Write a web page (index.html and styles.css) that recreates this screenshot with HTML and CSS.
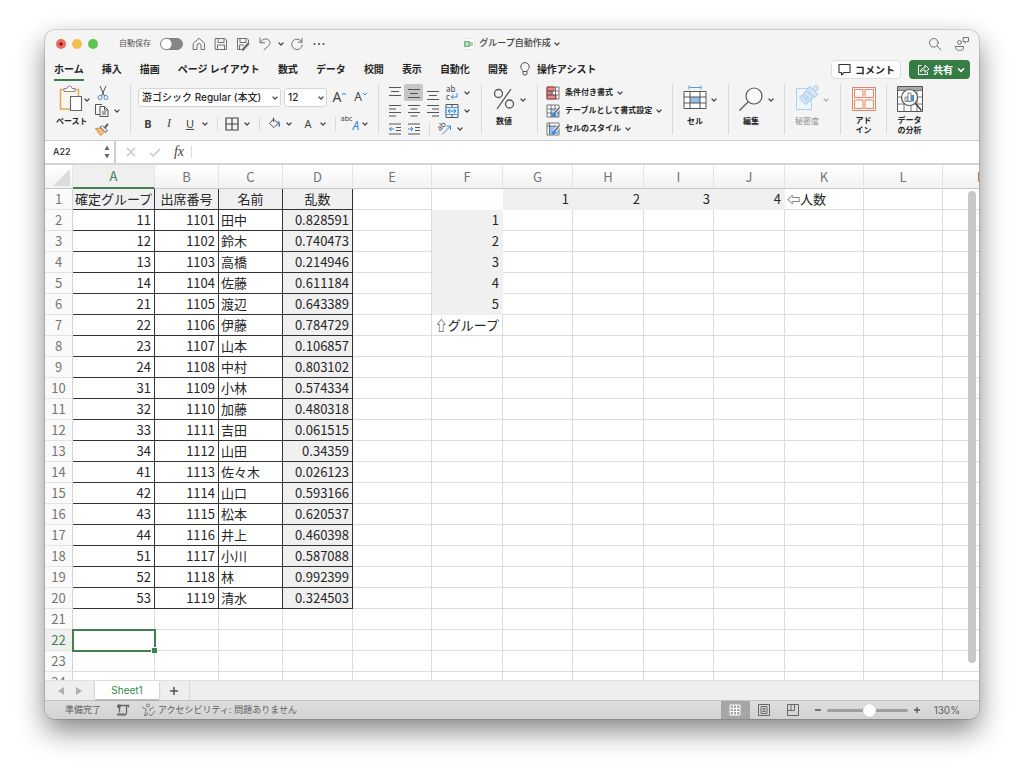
FILE: index.html
```html
<!DOCTYPE html>
<html lang="ja">
<head>
<meta charset="utf-8">
<title>グループ自動作成</title>
<link rel="stylesheet" href="styles.css">
</head>
<body>
<svg class="defs" aria-hidden="true">
  <symbol id="chev" viewBox="0 0 8 8"><path d="M2 3l2 2.2L6 3" fill="none" stroke="currentColor" stroke-width="1.2" stroke-linecap="round" stroke-linejoin="round"/></symbol>
</svg>
<main class="window">
  <header class="titlebar">
    <div class="title-left">
      <span class="lights"><i class="light red"></i><i class="light yellow"></i><i class="light green"></i></span>
      <label class="autosave">自動保存<input type="checkbox" class="switch"></label>
      <div class="quick">
        <button aria-label="ホーム画面"><svg width="14" height="14" viewBox="0 0 14 14"><path d="M1.5 6.2L7 1.3l5.500 4.900v6.300H9V8.500a2 2 0 0 0-4 0v4H1.500z"/></svg></button>
        <button aria-label="保存"><svg width="14" height="14" viewBox="0 0 14 14"><path d="M1.500 1.500h9.500l1.500 1.500v9.500h-11zM4 1.500v4h6v-4M3.500 12.500V8h7v4.500"/></svg></button>
        <button aria-label="名前を付けて保存"><svg width="14" height="14" viewBox="0 0 14 14"><path d="M5 12.500H1.500v-11h9.500l1.500 1.500v3M4 1.500v4h6v-4M3.500 12.500V8h4"/><path d="M7 12.500l5-5.500" stroke-width="2.600"/></svg></button>
        <button aria-label="元に戻す"><svg width="14" height="14" viewBox="0 0 14 14"><path d="M2 1v4.800h4.800M2.300 5.500C4 2.500 7.500 1 10 2.500c2.500 1.700 2.300 4.500.5 6.300L6 13"/></svg></button>
        <button class="narrow" aria-label="元に戻す履歴"><svg class="chev" width="8" height="8"><use href="#chev"/></svg></button>
        <button aria-label="繰り返し"><svg width="14" height="14" viewBox="0 0 14 14"><path d="M12 1.500v3.700H8.300M11.800 5A5.300 5.300 0 1 0 12.300 8"/></svg></button>
        <button aria-label="その他"><svg width="14" height="14" viewBox="0 0 14 14"><g fill="#555" stroke="none"><circle cx="2.500" cy="7" r="1.100"/><circle cx="7" cy="7" r="1.100"/><circle cx="11.500" cy="7" r="1.100"/></g></svg></button>
      </div>
    </div>
    <h1 class="doc-title"><svg width="12" height="12" viewBox="0 0 12 12"><path d="M2.500.5H9L11.500 3v8.500h-9z" fill="#fff" stroke="#ddd" stroke-width=".6"/><rect x="1" y="3" width="6" height="6" rx=".6" fill="#7fb98c"/><path d="M7 4h3v4H7z" fill="#a9d3b1"/><path d="M2.800 4.500l2.400 3M5.200 4.500l-2.400 3" stroke="#fff" stroke-width=".9"/></svg>グループ自動作成<svg class="chev" width="8" height="8"><use href="#chev"/></svg></h1>
    <div class="title-right">
      <button aria-label="検索"><svg width="14" height="14" viewBox="0 0 14 14"><circle cx="5.800" cy="5.800" r="4.300"/><path d="M9 9l4 4"/></svg></button>
      <button aria-label="共同編集"><svg width="16" height="16" viewBox="0 0 16 16"><circle cx="5.500" cy="6.500" r="2"/><path d="M1.500 10.500h8v1.500c0 3.300-8 3.300-8 0zM9.500 1.500h5v4h-2l-1.500 1.700V5.500H9.500z"/></svg></button>
    </div>
  </header>

  <nav class="tabs">
    <a href="#" class="active">ホーム</a><a href="#">挿入</a><a href="#">描画</a><a href="#">ページ レイアウト</a><a href="#">数式</a><a href="#">データ</a><a href="#">校閲</a><a href="#">表示</a><a href="#">自動化</a><a href="#">開発</a>
    <a href="#" class="assist"><svg width="12" height="14" viewBox="0 0 12 14"><path d="M4 9.500C3.800 8 1.800 7.200 1.800 4.800a4.200 4.200 0 0 1 8.400 0C10.200 7.200 8.200 8 8 9.500zM4 9.500v2.500l1 1h2l1-1V9.500" fill="none" stroke="#555"/></svg>操作アシスト</a>
    <div class="tab-actions">
      <button class="comment"><svg width="15" height="13" viewBox="0 0 15 13"><path d="M2 1.500h11v8H7l-2.500 2.500V9.500H2z" fill="none" stroke="#333" stroke-width="1.100" stroke-linejoin="round"/></svg>コメント</button>
      <button class="share"><svg width="13" height="13" viewBox="0 0 13 13"><path d="M4.500 2.500h-3v9h9V9M3.500 8.800c.3-2.500 1.800-4 4.500-4V2l4 4-4 3.500V7C6 7 4.500 7.500 3.500 8.800z" fill="none" stroke="#fff" stroke-linejoin="round"/></svg>共有<svg class="chev" width="10" height="10"><use href="#chev"/></svg></button>
    </div>
  </nav>

  <section class="ribbon" aria-label="ホーム">
    <div class="group paste">
      <div class="paste-main">
        <button class="stack"><svg width="25" height="28" viewBox="0 0 25 28"><path d="M1.500 5.500h18v19.500h-18z" fill="#f8f5ef" stroke="#e5a758" stroke-width="1.500"/><path d="M5 7.500V4.500h3a2.500 2.500 0 0 1 5 0h3v3z" fill="#fff" stroke="#888"/><path d="M11.500 12.500h11v14h-11z" fill="#fff" stroke="#666" stroke-width="1.100"/></svg><span>ペースト</span></button>
        <button class="drop" aria-label="貼り付けオプション"><svg class="chev" width="8" height="8"><use href="#chev"/></svg></button>
      </div>
      <div class="paste-side">
        <button class="inset" aria-label="切り取り"><svg width="16" height="16" viewBox="0 0 16 16"><path d="M5 1l4.500 10M11 1L6.500 11" stroke="#555" fill="none"/><circle cx="5" cy="12.500" r="2" fill="none" stroke="#4a90d0"/><circle cx="11" cy="12.500" r="2" fill="none" stroke="#4a90d0"/></svg></button>
        <div class="row"><button aria-label="コピー"><svg width="16" height="15" viewBox="0 0 16 15"><path d="M6 11.500H1.500v-10H8M6 3.500h4.500l3.500 3.500v6.500H6zM10.500 3.500V7H14M8 9h4M8 11h4" stroke="#555" fill="none"/></svg></button><button class="drop" aria-label="コピー オプション"><svg class="chev" width="8" height="8"><use href="#chev"/></svg></button></div>
        <button aria-label="書式のコピー"><svg width="16" height="14" viewBox="0 0 16 14"><path d="M1.500 6.500L6.500 6l4 4-4 3.500z" fill="#f5bb80" stroke="#e08a35"/><path d="M6 5l6 5.500 1.300-2.200L8.500 4z" stroke="#666" fill="#fff"/><path d="M10.500 6L14 2" stroke="#666" stroke-width="2"/></svg></button>
      </div>
    </div>
    <span class="divider"></span>

    <div class="group font">
      <div class="row">
        <span class="pick name"><select aria-label="フォント"><option>游ゴシック Regular (本文)</option></select><svg class="chev" width="8" height="8"><use href="#chev"/></svg></span>
        <span class="pick size"><select aria-label="フォント サイズ"><option>12</option></select><svg class="chev" width="8" height="8"><use href="#chev"/></svg></span>
        <button class="tool big" aria-label="拡大">A<svg width="6" height="12" viewBox="0 0 6 12"><path d="M1 3l2-2 2 2" fill="none" stroke="#3b87cf"/></svg></button>
        <button class="tool smaller" aria-label="縮小">A<svg width="6" height="12" viewBox="0 0 6 12"><path d="M1 1l2 2 2-2" fill="none" stroke="#3b87cf"/></svg></button>
      </div>
      <div class="row">
        <button class="tool bold">B</button><button class="tool italic">I</button><button class="tool under">U</button><button class="drop" aria-label="下線"><svg class="chev" width="8" height="8"><use href="#chev"/></svg></button>
        <span class="split"></span>
        <button class="tool" aria-label="罫線"><svg width="14" height="14" viewBox="0 0 14 14"><path d="M1 1h12v12H1zM7 1v12M1 7h12" fill="none" stroke="#444" stroke-width="1.200"/></svg></button><button class="drop" aria-label="罫線の種類"><svg class="chev" width="8" height="8"><use href="#chev"/></svg></button>
        <span class="split"></span>
        <button class="tool" aria-label="塗りつぶし"><svg width="14" height="14" viewBox="0 0 14 14"><path d="M6.500 2l4.500 4.500-4 4L2.500 6.500zM6.500.5V5" fill="none" stroke="#555"/><path d="M10.500 4.500c2 .5 2 3 1.500 5" fill="none" stroke="#2f7dcc" stroke-width="1.600"/></svg></button><button class="drop wide" aria-label="塗りつぶしの色"><svg class="chev" width="8" height="8"><use href="#chev"/></svg></button>
        <button class="tool" aria-label="フォントの色">A</button><button class="drop" aria-label="フォントの色を選択"><svg class="chev" width="8" height="8"><use href="#chev"/></svg></button>
        <span class="split"></span>
        <button class="tool phonetic" aria-label="ふりがな"><small>abc</small><em>A</em></button><button class="drop" aria-label="ふりがなの設定"><svg class="chev" width="8" height="8"><use href="#chev"/></svg></button>
      </div>
    </div>
    <span class="divider"></span>

    <div class="group align">
      <div class="row">
        <button class="cell" aria-label="上揃え"><svg width="14" height="14" viewBox="0 0 14 14"><path d="M1 1.500h12M3 5.500h8M1 9.500h12"/></svg></button>
        <button class="cell pressed" aria-label="上下中央揃え"><svg width="14" height="14" viewBox="0 0 14 14"><path d="M1 3.500h12M3 7.500h8M1 11.500h12"/></svg></button>
        <button class="cell" aria-label="下揃え"><svg width="14" height="14" viewBox="0 0 14 14"><path d="M1 5.500h12M3 9.500h8M1 13.500h12"/></svg></button>
        <button class="cell wrap" aria-label="折り返し"><span>ab</span><span>c<svg width="8" height="7" viewBox="0 0 8 7"><path d="M7 0v4H1.500M3.500 1.800L1.200 4l2.300 2.200" class="blue"/></svg></span></button>
        <button class="drop" aria-label="折り返しの設定"><svg class="chev" width="8" height="8"><use href="#chev"/></svg></button>
      </div>
      <div class="row">
        <button class="cell" aria-label="左揃え"><svg width="14" height="14" viewBox="0 0 14 14"><path d="M1 1.500h12M1 5h7M1 8.500h12M1 12h7"/></svg></button>
        <button class="cell" aria-label="中央揃え"><svg width="14" height="14" viewBox="0 0 14 14"><path d="M1 1.500h12M3.500 5h7M1 8.500h12M3.500 12h7"/></svg></button>
        <button class="cell" aria-label="右揃え"><svg width="14" height="14" viewBox="0 0 14 14"><path d="M1 1.500h12M6 5h7M1 8.500h12M6 12h7"/></svg></button>
        <button class="cell" aria-label="セルを結合"><svg width="14" height="14" viewBox="0 0 14 14"><path d="M1 .500h12v13H1zM7 .500v2.500M7 11v2.500"/><path d="M1 3.500h12v7H1z" class="edge"/><path d="M3 7h8M5 5L3 7l2 2M9 5l2 2-2 2" class="blue"/></svg></button>
        <button class="drop" aria-label="結合の設定"><svg class="chev" width="8" height="8"><use href="#chev"/></svg></button>
      </div>
      <div class="row">
        <button class="cell" aria-label="インデントを減らす"><svg width="14" height="14" viewBox="0 0 14 14"><path d="M1 2h12M8 5.500h5M8 8.500h5M1 12h12"/><path d="M6 7H1.500M3.500 5l-2 2 2 2" class="blue"/></svg></button>
        <button class="cell" aria-label="インデントを増やす"><svg width="14" height="14" viewBox="0 0 14 14"><path d="M1 2h12M8 5.500h5M8 8.500h5M1 12h12"/><path d="M1 7h5M4 5l2 2-2 2" class="blue"/></svg></button>
        <span class="split thin"></span>
        <button class="cell" aria-label="文字の向き"><svg width="15" height="15" viewBox="0 0 15 15"><text x="1" y="8" class="glyph" transform="rotate(-45 5 7)">ab</text><path d="M5 13.500L13 5.500M9.500 5H13.500V9" class="blue"/></svg></button>
        <button class="drop" aria-label="文字の向きの設定"><svg class="chev" width="8" height="8"><use href="#chev"/></svg></button>
      </div>
    </div>
    <span class="divider"></span>

    <div class="group single number"><button class="stack"><svg width="24" height="28" viewBox="0 0 24 28"><g fill="none" stroke="#555" stroke-width="1.300"><circle cx="6.500" cy="9.500" r="4"/><circle cx="17.500" cy="20" r="4"/><path d="M19 5L5 25"/></g></svg><span>数値</span></button><button class="drop" aria-label="数値の設定"><svg class="chev" width="8" height="8"><use href="#chev"/></svg></button></div>
    <span class="divider"></span>

    <div class="group styles">
      <button class="line"><svg width="14" height="14" viewBox="0 0 14 14"><path d="M1 1h12v12H1z" fill="#fff"/><path d="M1 1h7v4H1zM1 5h4v4H1zM1 9h9v4H1z" fill="#ee8585" stroke="#d94a4a"/><path d="M5 5h2v4H5z" fill="#4a90d0"/><path d="M1 1h12v12H1zM1 5h12M1 9h12M9.500 1v12" fill="none" stroke="#555" stroke-width=".8"/></svg>条件付き書式<svg class="chev" width="8" height="8"><use href="#chev"/></svg></button>
      <button class="line"><svg width="14" height="14" viewBox="0 0 14 14"><path d="M1 1h12v12H1z" fill="#fff"/><path d="M5 5h8v8H5z" fill="#a9cff2"/><path d="M1 1h12v12H1zM1 5h12M1 9h12M5 1v12M9 1v12" fill="none" stroke="#555" stroke-width=".8"/><path d="M13.500 3.500L8 9.500" stroke="#fff" stroke-width="3"/><path d="M13.500 3.500L8 9.500" stroke="#555" stroke-width="1.300"/><path d="M8.500 8.500c-2 0-2 3-4 3.500 2 1.500 5 .5 5.500-2z" fill="#3b87cf"/></svg>テーブルとして書式設定<svg class="chev" width="8" height="8"><use href="#chev"/></svg></button>
      <button class="line"><svg width="14" height="14" viewBox="0 0 14 14"><path d="M1 1h12v12H1z" fill="#fff"/><path d="M3.500 4h9v8h-9z" fill="#8fc0ee"/><path d="M1 1h12v12H1zM1 4h12M3.500 1v12" fill="none" stroke="#555" stroke-width=".8"/><path d="M13.500 3.500L8 9.500" stroke="#fff" stroke-width="3"/><path d="M13.500 3.500L8 9.500" stroke="#555" stroke-width="1.300"/><path d="M8.500 8.500c-2 0-2 3-4 3.500 2 1.500 5 .5 5.500-2z" fill="#3b87cf"/></svg>セルのスタイル<svg class="chev" width="8" height="8"><use href="#chev"/></svg></button>
    </div>
    <span class="divider"></span>

    <div class="group single"><button class="stack"><svg width="24" height="28" viewBox="0 0 24 28"><path d="M1 7.500h22v17H1z" fill="#fff"/><path d="M7 13h10v6H7z" fill="#8fc0ee"/><path d="M1 7.500h22v17H1zM1 13h22M1 19h22M7 7.500v17M17 7.500v17" fill="none" stroke="#555"/><path d="M6 3.500h12M6 1.500v4M18 1.500v4" stroke="#5a9ddb" fill="none"/></svg><span>セル</span></button><button class="drop" aria-label="セルの操作"><svg class="chev" width="8" height="8"><use href="#chev"/></svg></button></div>
    <span class="divider"></span>
    <div class="group single"><button class="stack"><svg width="26" height="28" viewBox="0 0 26 28"><circle cx="16" cy="12" r="8" fill="#fafafa" stroke="#555" stroke-width="1.200"/><path d="M10 18l-8.500 8.500" stroke="#555" stroke-width="1.200"/></svg><span>編集</span></button><button class="drop" aria-label="編集の操作"><svg class="chev" width="8" height="8"><use href="#chev"/></svg></button></div>
    <span class="divider"></span>
    <div class="group single"><button class="stack" disabled><svg width="24" height="28" viewBox="0 0 24 28"><path d="M16.500 14v11.500h-15v-21H13" fill="#eef5fb" stroke="#b3d0ea"/><g transform="rotate(45 13 12)" fill="#dceaf7" stroke="#a9cbe8"><path d="M8.500 9.500h9v10h-9zM7.500 4h11v4h-11zM11 -1h4v5h-4z"/><path d="M11 11.500v6M13 11.500v6M15 11.500v6"/></g></svg><span>秘密度</span></button><button class="drop" disabled aria-label="秘密度の設定"><svg class="chev" width="8" height="8"><use href="#chev"/></svg></button></div>
    <span class="divider"></span>
    <div class="group single addin"><button class="stack"><svg width="26" height="28" viewBox="0 0 26 28"><g fill="#fdf6f3" stroke="#e0866b"><path d="M1.500 3.500h23v23h-23z"/><path d="M3.500 5.500h8.500v8H3.500zM14 5.500h8.500v8H14zM3.500 16h8.500v8.500H3.500zM14 16h8.500v8.500H14z"/></g></svg><span>アド<br>イン</span></button></div>
    <span class="divider"></span>
    <div class="group single addin"><button class="stack"><svg width="28" height="28" viewBox="0 0 28 28"><path d="M1.500 2.500h25v25h-25z" fill="#fff" stroke="#555"/><path d="M2 3h24v3H2z" fill="#aaa"/><path d="M1.500 6.500h25M1.500 13h25M1.500 20h25M8 20v7M15 20v7M21 7v20" stroke="#777" fill="none"/><circle cx="13.500" cy="13.500" r="8" fill="#fff" stroke="#555" stroke-width="1.200"/><path d="M9 13h3v4.500H9z" fill="#ddd" stroke="#666" stroke-width=".7"/><path d="M12 9h3v8.500h-3z" fill="#fff" stroke="#555" stroke-width=".7"/><path d="M15 11h3v6.500h-3z" fill="#4a90d0"/><path d="M19.500 19.500l6 7" stroke="#444" stroke-width="1.500"/></svg><span>データ<br>の分析</span></button></div>
  </section>

  <section class="formula">
    <div class="namebox"><input aria-label="名前ボックス" value="A22"><svg width="8" height="16" viewBox="0 0 8 16"><path d="M1.500 6L4 1.500 6.500 6zM1.500 10L4 14.500 6.500 10z" fill="#666"/></svg></div>
    <button aria-label="キャンセル" disabled><svg width="12" height="12" viewBox="0 0 12 12"><path d="M2 2l8 8M10 2l-8 8" stroke="#c4c4c4" stroke-width="1.300"/></svg></button>
    <button aria-label="入力" disabled><svg width="12" height="12" viewBox="0 0 12 12"><path d="M1 7l3 3 7-7" fill="none" stroke="#c4c4c4" stroke-width="1.300"/></svg></button>
    <button class="fx">fx</button>
    <input class="formula-input" aria-label="数式バー">
  </section>

  <section class="sheet"><table class="grid"><colgroup id="cols"></colgroup><thead id="head"></thead><tbody id="body"></tbody></table><span class="scroll"></span></section>

  <footer>
    <div class="sheetbar">
      <button aria-label="前のシート"><svg width="8" height="8" viewBox="0 0 8 8"><path d="M7 0v8L1 4z" fill="#b0b0b0"/></svg></button>
      <button aria-label="次のシート"><svg width="8" height="8" viewBox="0 0 8 8"><path d="M1 0v8l6-4z" fill="#b0b0b0"/></svg></button>
      <button class="sheet-tab">Sheet1</button>
      <button class="add" aria-label="シートを追加"><svg width="10" height="10" viewBox="0 0 10 10"><path d="M5 1v8M1 5h8" stroke="#555" stroke-width="1.500"/></svg></button>
    </div>
    <div class="status">
      <span class="ready">準備完了</span>
      <svg width="14" height="14" viewBox="0 0 14 14"><path d="M4 2.500h8.500v2M10.500 2.500v7.500a2 2 0 0 1-3 1.500M1.500 11.500h6.500M3.500 5v4.500" fill="none" stroke="#666" stroke-width="1.300"/><circle cx="3" cy="3.200" r="2" fill="#666"/><path d="M1 10.500h8v2H1z" fill="#777"/></svg>
      <span class="access"><svg width="14" height="14" viewBox="0 0 14 14"><g fill="none" stroke="#777"><circle cx="6" cy="2.500" r="1.500"/><path d="M1 3.500c-.8 1 0 1.500 3 2.500v2.500L2.500 12.500l1.500.5L6 9.500M11 3.500c.8 1 0 1.500-3 2.500v2M7 11l2 2 4-5"/></g></svg>アクセシビリティ: 問題ありません</span>
      <div class="views">
        <button class="on" aria-label="標準"><svg width="12" height="12" viewBox="0 0 12 12"><path d="M1 1h10v10H1zM4.500 1v10M7.500 1v10M1 4.500h10M1 7.500h10" fill="none" stroke="#fff"/></svg></button>
        <button aria-label="ページ レイアウト表示"><svg width="12" height="12" viewBox="0 0 12 12"><path d="M.5.5h11v11H.500zM3 2.500h6v7H3zM4.500 4.500h3M4.500 6h3M4.500 7.500h3" fill="none" stroke="#666"/></svg></button>
        <button aria-label="改ページ プレビュー"><svg width="12" height="12" viewBox="0 0 12 12"><path d="M.5.500h11v11H.500zM.500 6.500h7v-6M4 .500v6" fill="none" stroke="#666"/></svg></button>
        <div class="zoom"><button aria-label="縮小表示"><svg width="8" height="8" viewBox="0 0 8 8"><path d="M1 4h6" stroke="#555" stroke-width="1.300"/></svg></button><input type="range" min="0" max="100" value="54" aria-label="ズーム"><button aria-label="拡大表示"><svg width="8" height="8" viewBox="0 0 8 8"><path d="M1 4h6M4 1v6" stroke="#555" stroke-width="1.300"/></svg></button></div>
        <span class="percent">130%</span>
      </div>
    </div>
  </footer>
</main>
<script src="script.js"></script>
</body>
</html>
```
FILE: styles.css
```css
* { box-sizing: border-box; }
body {
  margin: 0;
  padding: 30px 45px 60px;
  height: 100vh;
  display: flex;
  background: #fff;
  color: #262626;
  font: 8px/1.2 Inter, "Noto Sans CJK JP", sans-serif;
  overflow: hidden;
}
button, input, select { font: inherit; color: inherit; border: 0; background: none; padding: 0; margin: 0; }
button { display: flex; align-items: center; justify-content: center; }
a { color: inherit; text-decoration: none; }
svg { display: block; flex: none; }
.defs { width: 0; height: 0; position: absolute; }
.row { display: flex; align-items: center; }
.chev { color: #444; }

.window {
  flex: 1;
  min-width: 0;
  display: flex;
  flex-direction: column;
  border-radius: 10px;
  overflow: hidden;
  background: #f4f4f4;
  box-shadow: 0 0 0 1px rgba(0,0,0,.12), 0 12px 28px rgba(0,0,0,.48);
}

.titlebar { flex: none; height: 27px; display: grid; grid-template-columns: 1fr auto 1fr; align-items: center; }
.title-left { display: flex; align-items: center; padding-left: 11px; }
.lights { display: flex; gap: 6px; }
.light { width: 10px; height: 10px; border-radius: 50%; }
.red { background: radial-gradient(circle, #7a0e08 0 1px, #ec6a5e 2px); }
.yellow { background: #f5bf4f; }
.green { background: #61c554; }
.autosave { display: flex; align-items: center; gap: 9px; margin-left: 21px; color: #555; }
.switch {
  appearance: none;
  width: 23px;
  height: 12px;
  border-radius: 6px;
  border: 1px solid #808080;
  background: radial-gradient(circle at 5px 5px, #fff 0 5px, #858585 6px);
}
.quick { display: flex; align-items: center; gap: 8px; margin-left: 9px; }
.quick svg:not(.chev), .title-right svg { fill: none; stroke: #707070; stroke-width: 1; stroke-linejoin: round; stroke-linecap: round; }
.quick .narrow { margin: 0 -3px 0 -3px; }
.doc-title { display: flex; align-items: center; gap: 4px; margin: 0; font-size: 9px; font-weight: 500; color: #444; }
.doc-title .chev { margin-left: -2px; }
.title-right { display: flex; align-items: center; justify-content: flex-end; gap: 12px; padding-right: 9px; }

.tabs { flex: none; height: 25px; display: flex; align-items: center; gap: 18px; padding: 0 9px; font-size: 10px; font-weight: 700; white-space: nowrap; }
.tabs > a { line-height: 15px; padding: 2px 0; border-bottom: 2px solid transparent; border-top: 2px solid transparent; }
.tabs > .active { border-bottom-color: #3a7d4e; }
.tabs > .assist { display: flex; gap: 6px; margin-left: -7px; }
.tab-actions { margin-left: auto; display: flex; gap: 8px; }
.comment, .share { height: 19px; border-radius: 4px; font-weight: 700; font-size: 10px; gap: 3px; padding: 0 5px; }
.comment { background: #fff; border: 1px solid #dedede; }
.share { background: #367d45; color: #fff; padding: 0 4px 0 8px; }
.share .chev { color: #fff; }

.ribbon { flex: none; display: flex; align-items: flex-start; padding: 2px 0 4px; border-bottom: 1px solid #d0d0d0; font-weight: 700; }
.divider { flex: none; width: 1px; height: 50px; background: #dadada; }
.group { flex: none; height: 52px; width: 55px; display: flex; }
.stack { flex-direction: column; justify-content: flex-start; align-items: center; gap: 4px; line-height: 10px; }
.stack > span { white-space: nowrap; }
.stack:disabled { color: #a0a0a0; font-weight: 500; }
.drop { width: 8px; height: 16px; flex: none; }
.drop:disabled .chev { color: #aaa; }
.paste { width: 85px; padding-left: 11px; gap: 3px; }
.paste-main { display: flex; align-items: flex-start; }
.paste-main .drop { margin: 8px 0 0 -5px; }
.paste-side { display: grid; grid-template-rows: repeat(3, 17px); align-items: center; justify-items: start; gap: 1px; }
.paste-side .row { gap: 3px; }
.paste-side .inset { margin-left: 1px; }
.font { width: 247px; padding: 4px 0 0 7px; flex-direction: column; gap: 7px; }
.font .row { height: 19px; gap: 1px; }
.pick { display: grid; align-items: center; height: 19px; background: #fff; border: 1px solid #d6d6d6; border-radius: 3px; margin-right: 2px; }
.pick > * { grid-area: 1 / 1; }
.pick select { appearance: none; width: 100%; padding: 0 12px 0 3px; font-size: 10px; font-weight: 500; line-height: 15px; }
.pick .chev { justify-self: end; pointer-events: none; margin-right: 1px; }
.name { width: 143px; }
.size { width: 43px; }
.tool { width: 20px; height: 18px; font-family: "Noto Sans", sans-serif; font-size: 11px; font-weight: 400; color: #444; }
.big { font-size: 14px; }
.smaller { font-size: 12px; }
.bold { font-weight: 700; font-size: 11px; }
.italic { font: italic 12px "Liberation Serif", serif; }
.under { text-decoration: underline; }
.wide { margin-right: 4px; }
.split { width: 1px; height: 14px; background: #dadada; margin: 0 3px 0 7px; }
.thin { margin: 0 5px 0 6px; }
.phonetic small { font-size: 7px; line-height: 8px; align-self: flex-start; }
.phonetic em { color: #3b87cf; align-self: flex-end; font-size: 12px; line-height: 14px; }
.align { width: 102px; padding-left: 6px; display: grid; grid-template-rows: repeat(3, 17px); gap: 1px; }
.cell { width: 19px; height: 17px; border-radius: 2px; }
.cell + .drop { margin-left: 2px; }
.pressed { background: #c6c6c6; }
.cell svg path { stroke: #555; fill: none; }
.cell svg .blue { stroke: #3b87cf; }
.cell svg .edge { stroke: #4f97da; fill: #d9eafa; }
.glyph { font: 8px "Noto Sans", sans-serif; fill: #444; }
.wrap { flex-direction: column; align-items: flex-start; padding-left: 4px; font: 8px/8px "Noto Sans", sans-serif; color: #444; }
.wrap span { display: flex; }
.single { justify-content: center; align-items: flex-start; gap: 3px; }
.single .drop { margin-top: 8px; }
.styles { width: 134px; padding-left: 8px; display: grid; grid-template-rows: repeat(3, 17px); gap: 1px; }
.line { justify-content: flex-start; gap: 5px; }
.line .chev { margin-left: -2px; }
.addin { width: 45px; }
.addin .stack { gap: 3px; }

.formula { flex: none; height: 24px; display: flex; align-items: center; background: #fff; border-bottom: 2px solid #d4d4d4; }
.namebox { width: 71px; height: 22px; display: flex; align-items: center; padding: 0 3px 0 8px; border-right: 2px solid #cfcfcf; }
.namebox input { flex: 1; min-width: 0; font-size: 9px; font-weight: 500; }
.formula button { width: 24px; }
.formula > .namebox + button { margin-left: 3px; }
.formula .fx { font: italic 14px "Liberation Serif", serif; color: #444; }
.formula-input { flex: 1; height: 12px; border-left: 1px solid #ddd; padding-left: 6px; font-size: 10px; }

.sheet { flex: 1; min-height: 0; overflow: hidden; background: #fff; display: grid; grid-template: minmax(0, 1fr) / minmax(0, 1fr); }
.sheet > * { grid-area: 1 / 1; }
.scroll { justify-self: end; width: 8px; margin: 26px 3px 17px 0; border-radius: 4px; background: #c8c8c8; z-index: 2; }
.grid { width: 0; align-self: start; border-spacing: 0; table-layout: fixed; font: 13px/20px "Noto Sans CJK JP", sans-serif; font-weight: 400; }
.c-row { width: 28px; }
.w64 { width: 64px; }
.w70 { width: 70px; }
.w71 { width: 71px; }
.w79 { width: 79px; }
.w82 { width: 82px; }
.grid th { font-weight: 400; color: #757575; padding: 0; background: #fafafa; border-right: 1px solid #d4d4d4; border-bottom: 1px solid #e2e2e2; }
.grid thead th { height: 24px; background: linear-gradient(#fff, #f2f2f2); border-right-color: #e4e4e4; border-bottom-color: #c8c8c8; line-height: 22px; }
.grid thead .sel { border-bottom: 2px solid #3f7f50; color: #3f7f50; background: #efefef; }
.grid tbody .sel { color: #3f7f50; background: #f0f0f0; }
.corner svg { margin: 2px 1px 0 auto; }
.grid td { height: 21px; padding: 0 3px 0 2px; border-right: 1px solid #dcdcdc; border-bottom: 1px solid #dcdcdc; white-space: nowrap; }
.grid .box { border-color: #333; }
.grid .center { text-align: center; padding: 0; }
.grid .num { text-align: right; }
.grid .shade { background: #f0f0f0; }
.grid .plain { border-color: #f0f0f0; }
.grid .open { border-color: #fff; }
.grid .active-cell { position: relative; outline: 2px solid #3f7f50; outline-offset: -1px; }
.active-cell::after { content: ""; position: absolute; right: -3px; bottom: -3px; width: 5px; height: 5px; background: #3f7f50; border: 1px solid #fff; border-width: 1px 0 0 1px; }

footer { flex: none; }
.sheetbar { height: 21px; display: flex; align-items: flex-start; background: #eee; border-bottom: 1px solid #c4c4c4; border-top: 1px solid #e0e0e0; }
.sheetbar button { height: 19px; width: 18px; }
.sheetbar > button:first-child { margin-left: 7px; }
.sheetbar .sheet-tab { width: 64px; height: 18px; margin-left: 7px; background: #fff; color: #2f8a4b; font-size: 10px; box-shadow: 0 1px 2px rgba(0,0,0,.3); }
.sheetbar .add { width: 31px; border-right: 1px solid #d6d6d6; }
.status { height: 18px; display: flex; align-items: center; padding-left: 20px; background: linear-gradient(#dedede, #d2d2d2); font-size: 9px; color: #606060; }
.ready { margin-right: 15px; }
.access { display: flex; align-items: center; gap: 2px; margin-left: 12px; }
.views { margin-left: auto; display: flex; align-items: center; padding-right: 19px; }
.views > button { width: 29px; height: 18px; }
.views .on { background: #a6a6a6; }
.zoom { display: flex; align-items: center; gap: 5px; margin-left: 6px; }
.zoom input { appearance: none; width: 81px; height: 13px; }
.zoom input::-webkit-slider-runnable-track { height: 3px; border-radius: 2px; background: #a0a0a0; }
.zoom input::-webkit-slider-thumb { appearance: none; width: 13px; height: 13px; margin-top: -5px; border-radius: 50%; background: #fff; box-shadow: 0 0 1px #999; }
.percent { margin-left: 13px; font-size: 10px; }
```
FILE: script.js
```js
const columns = [
  ["A", "w82"], ["B", "w64"], ["C", "w64"], ["D", "w70"], ["E", "w79"], ["F", "w71"], ["G", "w70"],
  ["H", "w71"], ["I", "w70"], ["J", "w71"], ["K", "w79"], ["L", "w79"], ["M", "w79"]
];
const people = [
  [11, "田中", "0.828591"], [12, "鈴木", "0.740473"], [13, "高橋", "0.214946"], [14, "佐藤", "0.611184"],
  [21, "渡辺", "0.643389"], [22, "伊藤", "0.784729"], [23, "山本", "0.106857"], [24, "中村", "0.803102"],
  [31, "小林", "0.574334"], [32, "加藤", "0.480318"], [33, "吉田", "0.061515"], [34, "山田", "0.34359"],
  [41, "佐々木", "0.026123"], [42, "山口", "0.593166"], [43, "松本", "0.620537"], [44, "井上", "0.460398"],
  [51, "小川", "0.587088"], [52, "林", "0.992399"], [53, "清水", "0.324503"]
];
const cells = {
  A1: ["確定グループ", "box center shade"], B1: ["出席番号", "box center shade"],
  C1: ["名前", "box center shade"], D1: ["乱数", "box center shade"],
  F1: ["", "open"], K1: ["⇦人数", ""], F7: ["⇧グループ", "num"], A22: ["", "active-cell"]
};
people.forEach(([group, name, random], i) => {
  const r = i + 2;
  cells["A" + r] = [group, "box num"];
  cells["B" + r] = [1101 + i, "box num"];
  cells["C" + r] = [name, "box"];
  cells["D" + r] = [random, "box num shade"];
});
["G", "H", "I", "J"].forEach((c, i) => { cells[c + 1] = [i + 1, "num shade plain"]; });
for (let i = 1; i <= 5; i++) cells["F" + (i + 1)] = [i, "num shade plain"];

document.getElementById("cols").innerHTML =
  '<col class="c-row">' + columns.map(([, w]) => `<col class="${w}">`).join("");
document.getElementById("head").innerHTML =
  '<tr><th class="corner"><svg width="18" height="18" viewBox="0 0 18 18"><path d="M17 0v17H0z" fill="#dcdcdc"/></svg></th>' +
  columns.map(([c]) => `<th scope="col"${c === "A" ? ' class="sel"' : ""}>${c}</th>`).join("") + "</tr>";
let rows = "";
for (let r = 1; r <= 24; r++) {
  rows += `<tr><th scope="row"${r === 22 ? ' class="sel"' : ""}>${r}</th>`;
  for (const [c] of columns) {
    const [text, cls] = cells[c + r] || ["", ""];
    rows += `<td class="${cls}">${text}</td>`;
  }
  rows += "</tr>";
}
document.getElementById("body").innerHTML = rows;
```
